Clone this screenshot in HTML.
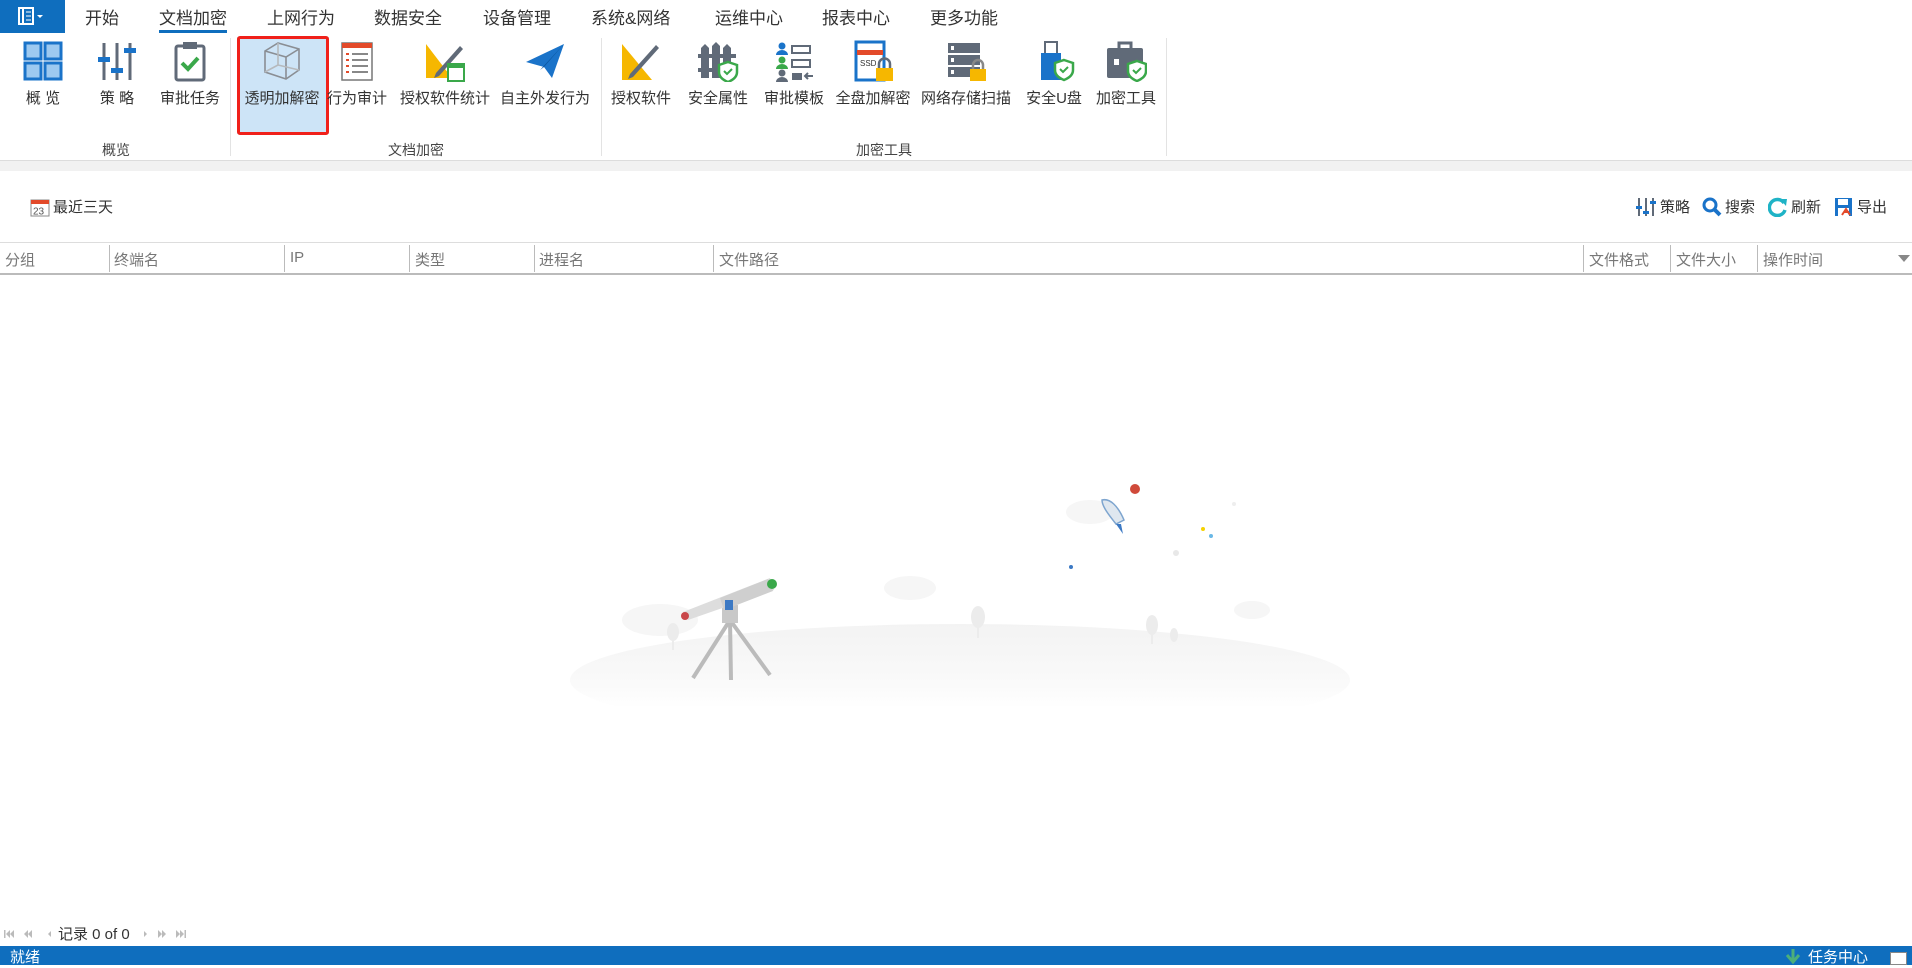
<!DOCTYPE html>
<html><head><meta charset="utf-8"><style>
*{margin:0;padding:0;box-sizing:border-box}
body{width:1912px;height:965px;overflow:hidden;background:#fff;font-family:"Liberation Sans","Noto Sans CJK SC",sans-serif;color:#333;position:relative}
.a{position:absolute}
.tab{position:absolute;top:4px;font-size:17px;color:#333;white-space:nowrap}
.btn{position:absolute;top:40px;width:90px;text-align:center;font-size:15px;color:#333;white-space:nowrap}
.btn svg{display:block;margin:0 auto 5px;width:42px;height:42px}
.btn span{display:block;margin-left:-20px;margin-right:-20px}
.grp{position:absolute;top:140px;font-size:14px;color:#444;transform:translateX(-50%)}
.sep{position:absolute;top:38px;width:1px;height:118px;background:#e3e3e3}
.th{position:absolute;top:249px;font-size:15px;color:#777}
.cs{position:absolute;top:245px;width:1px;height:27px;background:#bbb}
.tb{position:absolute;top:196px;font-size:15px;color:#333;display:flex;align-items:center;gap:3px}
</style></head><body>
<!-- tab bar -->
<div class="a" style="left:0;top:0;width:65px;height:33px;background:#0f6ebe"></div>
<svg class="a" style="left:18px;top:7px" width="30" height="18" viewBox="0 0 30 18"><rect x="1" y="1" width="14" height="16" fill="none" stroke="#fff" stroke-width="2"/><line x1="5" y1="1" x2="5" y2="17" stroke="#fff" stroke-width="2"/><line x1="8" y1="5" x2="13" y2="5" stroke="#fff"/><line x1="8" y1="9" x2="13" y2="9" stroke="#fff"/><line x1="8" y1="13" x2="13" y2="13" stroke="#fff"/><path d="M19 8l3 3 3-3z" fill="#fff"/></svg>
<div class="tab" style="left:85px">开始</div>
<div class="tab" style="left:159px">文档加密</div>
<div class="a" style="left:159px;top:30px;width:68px;height:3px;background:#0f6ebe"></div>
<div class="tab" style="left:267px">上网行为</div>
<div class="tab" style="left:374px">数据安全</div>
<div class="tab" style="left:483px">设备管理</div>
<div class="tab" style="left:591px">系统&amp;网络</div>
<div class="tab" style="left:715px">运维中心</div>
<div class="tab" style="left:822px">报表中心</div>
<div class="tab" style="left:930px">更多功能</div>

<!-- ribbon -->
<div class="a" style="left:237px;top:37px;width:92px;height:97px;background:#cde4f7"></div>
<div class="a" style="left:237px;top:36px;width:92px;height:99px;border:3px solid #f0201a;border-radius:3px"></div>

<div class="btn" style="left:-2px"><svg viewBox="0 0 42 42"><g fill="#9dc9f0" stroke="#1a73c9" stroke-width="3"><rect x="3" y="3" width="16" height="16"/><rect x="23" y="3" width="16" height="16"/><rect x="3" y="23" width="16" height="16"/><rect x="23" y="23" width="16" height="16"/></g></svg><span>概 览</span></div>
<div class="btn" style="left:72px"><svg viewBox="0 0 42 42"><g stroke="#606a78" stroke-width="3"><line x1="8" y1="3" x2="8" y2="40"/><line x1="21" y1="3" x2="21" y2="40"/><line x1="34" y1="3" x2="34" y2="40"/></g><g fill="#1a73c9"><rect x="2" y="17" width="12" height="5"/><rect x="15" y="28" width="12" height="5"/><rect x="28" y="8" width="12" height="5"/></g></svg><span>策 略</span></div>
<div class="btn" style="left:145px"><svg viewBox="0 0 42 42"><rect x="7" y="6" width="28" height="34" rx="2" fill="#fff" stroke="#606a78" stroke-width="3"/><rect x="14" y="2" width="14" height="7" fill="#606a78"/><path d="M13 23l6 6 10-11" fill="none" stroke="#3aa84a" stroke-width="4"/></svg><span>审批任务</span></div>
<div class="sep" style="left:230px"></div>
<div class="btn" style="left:237px"><svg viewBox="0 0 42 42"><g fill="none" stroke="#8a8e94" stroke-width="1.6"><path d="M4 11L17 3 38 9 38 30 25 39 4 32Z"/><path d="M4 11L25 17 38 9M25 17V39"/><path d="M17 3V25L4 32M17 25L38 30" stroke="#b6b9bd"/></g></svg><span>透明加解密</span></div>
<div class="btn" style="left:312px"><svg viewBox="0 0 42 42"><rect x="6" y="3" width="30" height="37" fill="#fff" stroke="#777" stroke-width="1.5"/><rect x="6" y="3" width="30" height="5" fill="#e34a2a"/><g stroke="#e34a2a" stroke-width="2"><line x1="10" y1="14" x2="13" y2="14"/><line x1="10" y1="20" x2="13" y2="20"/><line x1="10" y1="26" x2="13" y2="26"/><line x1="10" y1="32" x2="13" y2="32"/></g><g stroke="#888" stroke-width="2"><line x1="16" y1="14" x2="32" y2="14"/><line x1="16" y1="20" x2="32" y2="20"/><line x1="16" y1="26" x2="32" y2="26"/><line x1="16" y1="32" x2="32" y2="32"/></g></svg><span>行为审计</span></div>
<div class="btn" style="left:400px"><svg viewBox="0 0 42 42"><path d="M2 4L28 38H2Z" fill="#f6b700"/><path d="M12 33L36 6 39 9 15 36 10 38Z" fill="#606a78"/><rect x="24" y="24" width="16" height="17" fill="#fff" stroke="#3aa84a" stroke-width="2"/><rect x="24" y="24" width="16" height="4" fill="#3aa84a"/></svg><span>授权软件统计</span></div>
<div class="btn" style="left:500px"><svg viewBox="0 0 42 42"><path d="M2 22L40 4 28 38 20 27Z" fill="#1a73c9"/><path d="M20 27L40 4 16 30Z" fill="#0b56a0"/></svg><span>自主外发行为</span></div>
<div class="sep" style="left:601px"></div>
<div class="btn" style="left:596px"><svg viewBox="0 0 42 42"><path d="M2 4L32 40H2Z" fill="#f6b700"/><path d="M10 34L36 5 39 8 13 37 8 39Z" fill="#606a78"/></svg><span>授权软件</span></div>
<div class="btn" style="left:673px"><svg viewBox="0 0 42 42"><g fill="#606a78"><path d="M4 8l4-4 4 4v30H4z"/><path d="M15 6l4-4 4 4v32h-8z"/><path d="M26 8l4-4 4 4v30h-8z"/><rect x="1" y="14" width="38" height="4"/><rect x="1" y="28" width="38" height="4"/></g><path d="M31 22l9 3v7c0 5-4 8-9 10-5-2-9-5-9-10v-7z" fill="#fff" stroke="#3aa84a" stroke-width="2.5"/><path d="M27 31l3 3 5-5" fill="none" stroke="#3aa84a" stroke-width="2"/></svg><span>安全属性</span></div>
<div class="btn" style="left:749px"><svg viewBox="0 0 42 42"><circle cx="9" cy="6" r="3.5" fill="#1a73c9"/><path d="M3 15a6 5 0 0 1 12 0z" fill="#1a73c9"/><circle cx="9" cy="20" r="3.5" fill="#3aa84a"/><path d="M3 29a6 5 0 0 1 12 0z" fill="#3aa84a"/><circle cx="9" cy="33" r="3.5" fill="#606a78"/><path d="M3 42a6 5 0 0 1 12 0z" fill="#606a78"/><g fill="none" stroke="#606a78" stroke-width="2"><rect x="19" y="6" width="18" height="7"/><rect x="19" y="20" width="18" height="7"/></g><rect x="19" y="33" width="10" height="7" fill="#606a78"/><path d="M40 36h-8m3-3l-3 3 3 3" stroke="#606a78" stroke-width="2" fill="none"/></svg><span>审批模板</span></div>
<div class="btn" style="left:828px"><svg viewBox="0 0 42 42"><rect x="4" y="2" width="28" height="38" fill="#fff" stroke="#1a73c9" stroke-width="3"/><rect x="5" y="10" width="26" height="5" fill="#e34a2a"/><text x="8" y="26" font-size="8" fill="#333" font-family="Liberation Sans">SSD</text><rect x="24" y="28" width="17" height="13" fill="#f6b700"/><path d="M27 28v-4a5 5 0 0 1 11 0v4" fill="none" stroke="#606a78" stroke-width="2.5"/></svg><span>全盘加解密</span></div>
<div class="btn" style="left:921px"><svg viewBox="0 0 42 42"><g fill="#606a78"><rect x="3" y="3" width="32" height="10"/><rect x="3" y="15" width="32" height="10"/><rect x="3" y="27" width="32" height="10"/></g><g fill="#fff"><rect x="6" y="6" width="3" height="4"/><rect x="6" y="18" width="3" height="4"/><rect x="6" y="30" width="3" height="4"/></g><rect x="25" y="29" width="16" height="12" fill="#f6b700"/><path d="M28 29v-4a5 5 0 0 1 10 0v4" fill="none" stroke="#888" stroke-width="2.5"/></svg><span>网络存储扫描</span></div>
<div class="btn" style="left:1009px"><svg viewBox="0 0 42 42"><rect x="12" y="2" width="12" height="12" fill="#fff" stroke="#606a78" stroke-width="2"/><rect x="8" y="13" width="20" height="27" fill="#1a73c9"/><path d="M31 20l9 3v7c0 5-4 8-9 10-5-2-9-5-9-10v-7z" fill="#fff" stroke="#3aa84a" stroke-width="2.5"/><path d="M27 29l3 3 5-5" fill="none" stroke="#3aa84a" stroke-width="2"/></svg><span>安全U盘</span></div>
<div class="btn" style="left:1081px"><svg viewBox="0 0 42 42"><path d="M14 8V3h12v5" fill="none" stroke="#606a78" stroke-width="3"/><rect x="2" y="8" width="36" height="30" rx="2" fill="#606a78"/><rect x="9" y="19" width="5" height="6" fill="#fff"/><path d="M32 21l9 3v7c0 5-4 8-9 10-5-2-9-5-9-10v-7z" fill="#fff" stroke="#3aa84a" stroke-width="2.5"/><path d="M28 30l3 3 5-5" fill="none" stroke="#3aa84a" stroke-width="2"/></svg><span>加密工具</span></div>
<div class="sep" style="left:1166px"></div>

<div class="grp" style="left:116px">概览</div>
<div class="grp" style="left:416px">文档加密</div>
<div class="grp" style="left:884px">加密工具</div>
<div class="a" style="left:0;top:160px;width:1912px;height:1px;background:#dcdcdc"></div>
<div class="a" style="left:0;top:161px;width:1912px;height:10px;background:#f1f1f1"></div>

<!-- toolbar -->
<div class="tb" style="left:30px"><svg width="20" height="20" viewBox="0 0 20 20"><rect x="1" y="3" width="18" height="16" fill="#fff" stroke="#888"/><rect x="1" y="3" width="18" height="4" fill="#e34a2a"/><text x="3" y="17.5" font-size="10" fill="#555" font-family="Liberation Sans">23</text></svg>最近三天</div>
<div class="tb" style="left:1635px"><svg width="22" height="20" viewBox="0 0 22 20"><g stroke="#606a78" stroke-width="2"><line x1="4" y1="1" x2="4" y2="19"/><line x1="11" y1="1" x2="11" y2="19"/><line x1="18" y1="1" x2="18" y2="19"/></g><g fill="#1a73c9"><rect x="1" y="9" width="6" height="3"/><rect x="8" y="14" width="6" height="3"/><rect x="15" y="4" width="6" height="3"/></g></svg>策略</div>
<div class="tb" style="left:1702px"><svg width="20" height="20" viewBox="0 0 20 20"><circle cx="8" cy="8" r="6" fill="none" stroke="#1a73c9" stroke-width="3"/><line x1="12" y1="12" x2="18" y2="18" stroke="#1a73c9" stroke-width="4"/></svg>搜索</div>
<div class="tb" style="left:1768px"><svg width="20" height="20" viewBox="0 0 20 20"><path d="M16 6A8 8 0 1 0 17 13" fill="none" stroke="#1fb3c6" stroke-width="3.5"/><path d="M12 2l7 0-1 7z" fill="#1fb3c6"/></svg>刷新</div>
<div class="tb" style="left:1834px"><svg width="20" height="20" viewBox="0 0 20 20"><rect x="1" y="1" width="17" height="18" fill="#1a73c9"/><rect x="4" y="2" width="10" height="6" fill="#fff"/><rect x="4" y="11" width="11" height="8" fill="#fff"/><path d="M8 18l4-6 4 6M10 15h5" stroke="#e34a2a" stroke-width="2" fill="none"/></svg>导出</div>

<!-- table header -->
<div class="a" style="left:0;top:242px;width:1912px;height:1px;background:#ddd"></div>
<div class="a" style="left:0;top:273px;width:1912px;height:2px;background:#bbb"></div>
<div class="th" style="left:5px">分组</div>
<div class="cs" style="left:109px"></div><div class="th" style="left:114px">终端名</div>
<div class="cs" style="left:284px"></div><div class="th" style="left:290px">IP</div>
<div class="cs" style="left:409px"></div><div class="th" style="left:415px">类型</div>
<div class="cs" style="left:534px"></div><div class="th" style="left:539px">进程名</div>
<div class="cs" style="left:713px"></div><div class="th" style="left:719px">文件路径</div>
<div class="cs" style="left:1583px"></div><div class="th" style="left:1589px">文件格式</div>
<div class="cs" style="left:1670px"></div><div class="th" style="left:1676px">文件大小</div>
<div class="cs" style="left:1757px"></div><div class="th" style="left:1763px">操作时间</div>
<svg class="a" style="left:1898px;top:255px" width="12" height="7"><path d="M0 0h12l-6 7z" fill="#888"/></svg>

<!-- illustration -->
<svg class="a" style="left:560px;top:470px" width="800" height="250" viewBox="560 470 800 250">
<defs><linearGradient id="g" x1="0" y1="0" x2="0" y2="1"><stop offset="0" stop-color="#f3f3f3"/><stop offset="0.55" stop-color="#fafafa"/><stop offset="0.75" stop-color="#fff"/></linearGradient></defs>
<ellipse cx="960" cy="680" rx="390" ry="56" fill="url(#g)"/>
<ellipse cx="660" cy="620" rx="38" ry="16" fill="#f6f6f6"/>
<ellipse cx="910" cy="588" rx="26" ry="12" fill="#f6f6f6"/>
<ellipse cx="1090" cy="512" rx="24" ry="12" fill="#f6f6f6"/>
<ellipse cx="1252" cy="610" rx="18" ry="9" fill="#f6f6f6"/>
<g fill="#ececec"><ellipse cx="673" cy="632" rx="6" ry="9"/><rect x="672" y="636" width="2" height="14"/><ellipse cx="978" cy="617" rx="7" ry="11"/><rect x="977" y="622" width="2" height="16"/><ellipse cx="1152" cy="625" rx="6" ry="10"/><rect x="1151" y="630" width="2" height="14"/><ellipse cx="1174" cy="635" rx="4" ry="7"/></g>
<g stroke="#bbb" stroke-width="4"><line x1="730" y1="620" x2="693" y2="678"/><line x1="730" y1="620" x2="770" y2="675"/><line x1="730" y1="620" x2="731" y2="680"/></g>
<rect x="722" y="605" width="16" height="18" fill="#c8c8c8"/>
<path d="M683 612L770 578 774 590 688 620Z" fill="#ddd"/>
<path d="M720 598L768 579 773 591 724 610Z" fill="#cfcfcf"/>
<circle cx="772" cy="584" r="5" fill="#3aa84a"/>
<circle cx="685" cy="616" r="4" fill="#c9474a"/>
<rect x="725" y="600" width="8" height="10" fill="#3c79c4"/>
<circle cx="1135" cy="489" r="5" fill="#d04a3a"/>
<path d="M1102 500c8-2 16 6 22 20l-8 4c-8-10-14-18-14-24z" fill="#dfe7ef" stroke="#7ea5cf" stroke-width="1.5"/>
<path d="M1116 524l7 10-2-10z" fill="#3c79c4"/>
<circle cx="1071" cy="567" r="2" fill="#3c79c4"/>
<circle cx="1203" cy="529" r="2" fill="#f6d200"/>
<circle cx="1211" cy="536" r="2" fill="#6ab8e6"/>
<circle cx="1176" cy="553" r="3" fill="#e8e8e8"/>
<circle cx="1234" cy="504" r="2" fill="#eee"/>
</svg>

<!-- pager -->
<svg class="a" style="left:4px;top:929px" width="52" height="10" viewBox="0 0 52 10" fill="#bbb"><rect x="0" y="1" width="1.5" height="8"/><path d="M6 1v8L2 5z M10 1v8L6 5z"/><path d="M24 1v8L20 5z M28 1v8L24 5z"/><path d="M47 2v6L44 5z"/></svg>
<div class="a" style="left:58px;top:923px;font-size:15px;color:#333">记录 0 of 0</div>
<svg class="a" style="left:144px;top:929px" width="46" height="10" viewBox="0 0 46 10" fill="#bbb"><path d="M0 2v6L3 5z"/><path d="M14 1v8L18 5z M18 1v8L22 5z"/><path d="M32 1v8L36 5z M36 1v8L40 5z"/><rect x="40.5" y="1" width="1.5" height="8"/></svg>

<!-- status -->
<div class="a" style="left:0;top:946px;width:1912px;height:19px;background:#0f6ebe"></div>
<div class="a" style="left:10px;top:948px;font-size:15px;color:#fff;line-height:20px">就绪</div>
<svg class="a" style="left:1785px;top:949px" width="16" height="16"><path d="M8 0v12M2 6l6 7 6-7" stroke="#4caf7a" stroke-width="3" fill="none"/></svg>
<div class="a" style="left:1808px;top:948px;font-size:15px;color:#fff;line-height:20px">任务中心</div>
<div class="a" style="left:1890px;top:952px;width:17px;height:13px;background:#fff;border:1px solid #888"></div>
</body></html>
